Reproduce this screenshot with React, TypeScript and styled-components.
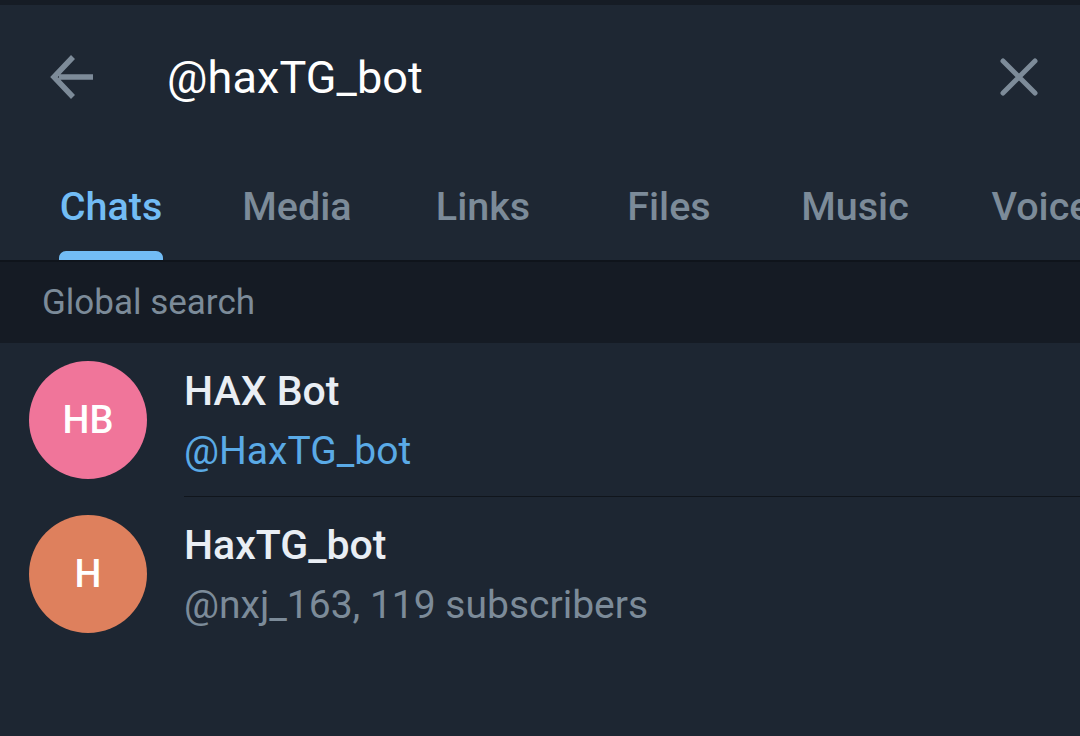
import React from "react";
import styled, { createGlobalStyle } from "styled-components";

const Global = createGlobalStyle`
  html, body { margin: 0; padding: 0; background: #1d2632; }
  body { font-family: Roboto, "Noto Sans", sans-serif; -webkit-font-smoothing: antialiased; }
  * { box-sizing: border-box; }
`;

const Screen = styled.div`
  width: 1080px;
  height: 736px;
  overflow: hidden;
  background: #1d2632;
  display: flex;
  flex-direction: column;
`;

const TopStrip = styled.div`
  height: 5px;
  background: #161c25;
`;

const Header = styled.div`
  height: 144px;
  display: flex;
  align-items: center;
  background: #1e2733;
`;

const IconButton = styled.div<{ $w: number; $ml: number; $mr: number }>`
  width: ${(p) => p.$w}px;
  margin-left: ${(p) => p.$ml}px;
  margin-right: ${(p) => p.$mr}px;
  display: flex;
  align-items: center;
  justify-content: center;
  flex-shrink: 0;
`;

const SearchText = styled.div`
  flex: 1;
  margin-left: 70px;
  font-size: 45px;
  font-weight: 400;
  color: #ffffff;
  letter-spacing: 0.1px;
`;

const TabBar = styled.div`
  height: 113px;
  display: flex;
  background: #1e2733;
  padding-left: 18px;
  overflow: hidden;
  border-bottom: 2px solid #0f141b;
`;

const Tab = styled.div`
  width: 186px;
  flex-shrink: 0;
  display: flex;
  justify-content: center;
`;

const TabInner = styled.div`
  display: flex;
  flex-direction: column;
  align-items: center;
  justify-content: flex-end;
  height: 100%;
`;

const TabLabel = styled.div<{ $active?: boolean }>`
  font-size: 39.5px;
  font-weight: 500;
  line-height: 44px;
  color: ${(p) => (p.$active ? "#72bcf5" : "#7c8b99")};
  margin-bottom: 22px;
  white-space: nowrap;
`;

const Indicator = styled.div<{ $active?: boolean }>`
  height: 9px;
  width: calc(100% + 2px);
  border-radius: 7px 7px 0 0;
  background: ${(p) => (p.$active ? "#72bcf5" : "transparent")};
`;

const SectionHeader = styled.div`
  height: 81px;
  display: flex;
  align-items: center;
  padding-left: 42px;
  background: #151b24;
  font-size: 35px;
  color: #7c8b99;
`;

const Row = styled.div`
  height: 154px;
  display: flex;
`;

const Avatar = styled.div<{ $bg: string }>`
  width: 118px;
  height: 118px;
  margin: 18px 37px 0 29px;
  border-radius: 50%;
  background: ${(p) => p.$bg};
  color: #ffffff;
  display: flex;
  align-items: center;
  justify-content: center;
  font-size: 38px;
  font-weight: 500;
  flex-shrink: 0;
`;

const Content = styled.div<{ $divider?: boolean }>`
  flex: 1;
  padding-top: 18px;
  border-bottom: 1px solid ${(p) => (p.$divider ? "#10151c" : "transparent")};
`;

const Title = styled.div`
  font-size: 41px;
  font-weight: 500;
  line-height: 60px;
  color: #e9eef4;
`;

const Subtitle = styled.div<{ $blue?: boolean }>`
  font-size: 39px;
  font-weight: 400;
  line-height: 60px;
  color: ${(p) => (p.$blue ? "#5aaae6" : "#7c8b99")};
`;

const tabs = ["Chats", "Media", "Links", "Files", "Music", "Voice"];

const results = [
  { initials: "HB", color: "#f0759a", title: "HAX Bot", sub: "@HaxTG_bot", blue: true },
  { initials: "H", color: "#de805d", title: "HaxTG_bot", sub: "@nxj_163, 119 subscribers", blue: false },
];

export default function App() {
  return (
    <Screen>
      <Global />
      <TopStrip />
      <Header>
        <IconButton $w={48} $ml={49} $mr={0}>
          <svg width="48" height="48" viewBox="0 0 48 48">
            <path d="M44 27 H10 M24 7 L5 27 L24 47" fill="none" stroke="#7d8b99" strokeWidth="5.5" strokeLinejoin="miter" transform="translate(0,-3)" />
          </svg>
        </IconButton>
        <SearchText>@haxTG_bot</SearchText>
        <IconButton $w={48} $ml={0} $mr={37}>
          <svg width="48" height="48" viewBox="0 0 48 48">
            <path d="M8 8 L40 40 M40 8 L8 40" fill="none" stroke="#7d8b99" strokeWidth="5" strokeLinecap="round" />
          </svg>
        </IconButton>
      </Header>
      <TabBar>
        {tabs.map((t, i) => (
          <Tab key={t}>
            <TabInner>
              <TabLabel $active={i === 0}>{t}</TabLabel>
              <Indicator $active={i === 0} />
            </TabInner>
          </Tab>
        ))}
      </TabBar>
      <SectionHeader>Global search</SectionHeader>
      {results.map((r, i) => (
        <Row key={r.title}>
          <Avatar $bg={r.color}>{r.initials}</Avatar>
          <Content $divider={i < results.length - 1}>
            <Title>{r.title}</Title>
            <Subtitle $blue={r.blue}>{r.sub}</Subtitle>
          </Content>
        </Row>
      ))}
    </Screen>
  );
}
